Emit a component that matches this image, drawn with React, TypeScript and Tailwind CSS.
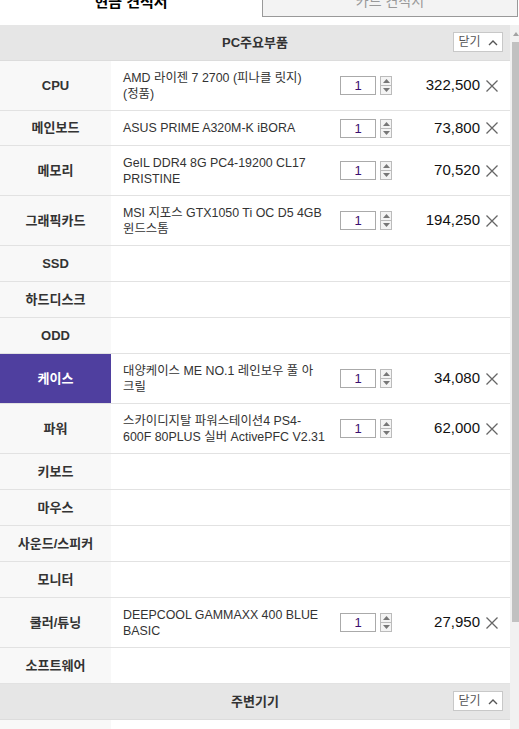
import React from 'react'

type Row = {
  label: string
  lines?: string[]
  price?: string
  h: string
  active?: boolean
}

const rows: Row[] = [
  { label: 'CPU', lines: ['AMD 라이젠 7 2700 (피나클 릿지)', '(정품)'], price: '322,500', h: 'h-[50px]' },
  { label: '메인보드', lines: ['ASUS PRIME A320M-K iBORA'], price: '73,800', h: 'h-[35px]' },
  { label: '메모리', lines: ['GeIL DDR4 8G PC4-19200 CL17', 'PRISTINE'], price: '70,520', h: 'h-[50px]' },
  { label: '그래픽카드', lines: ['MSI 지포스 GTX1050 Ti OC D5 4GB', '윈드스톰'], price: '194,250', h: 'h-[50px]' },
  { label: 'SSD', h: 'h-[36px]' },
  { label: '하드디스크', h: 'h-[36px]' },
  { label: 'ODD', h: 'h-[36px]' },
  { label: '케이스', lines: ['대양케이스 ME NO.1 레인보우 풀 아', '크릴'], price: '34,080', h: 'h-[50px]', active: true },
  { label: '파워', lines: ['스카이디지탈 파워스테이션4 PS4-', '600F 80PLUS 실버 ActivePFC V2.31'], price: '62,000', h: 'h-[50px]' },
  { label: '키보드', h: 'h-[36px]' },
  { label: '마우스', h: 'h-[36px]' },
  { label: '사운드/스피커', h: 'h-[36px]' },
  { label: '모니터', h: 'h-[36px]' },
  { label: '쿨러/튜닝', lines: ['DEEPCOOL GAMMAXX 400 BLUE', 'BASIC'], price: '27,950', h: 'h-[50px]' },
  { label: '소프트웨어', h: 'h-[36px]' },
]

const CloseButton = () => (
  <button className="absolute right-[7px] top-[7px] flex h-[20px] w-[50px] items-center justify-center gap-[7px] border border-[#c8c8c8] bg-white text-[12px] leading-none text-[#555]">
    <span>닫기</span>
    <svg width="10" height="7" viewBox="0 0 10 7">
      <path d="M1 6 L5 2 L9 6" fill="none" stroke="#555" strokeWidth="1.4" />
    </svg>
  </button>
)

const SectionHeader = ({ title }: { title: string }) => (
  <div className="relative flex h-[36px] items-center justify-center border-b border-[#dcdcdc] bg-[#e6e6e6]">
    <span className="text-[13px] font-bold text-[#333]">{title}</span>
    <CloseButton />
  </div>
)

const Stepper = () => (
  <div className="flex items-center gap-[4px]">
    <div className="flex h-[19px] w-[36px] items-center justify-center border border-[#aaa] bg-white text-[13px] leading-none text-[#3a1070]">
      1
    </div>
    <div className="flex h-[19px] w-[12px] flex-col border border-[#bbb] bg-[#f4f4f4]">
      <div className="flex flex-1 items-center justify-center border-b border-[#bbb]">
        <svg width="7" height="4" viewBox="0 0 7 4">
          <path d="M0 4 L3.5 0 L7 4 Z" fill="#777" />
        </svg>
      </div>
      <div className="flex flex-1 items-center justify-center">
        <svg width="7" height="4" viewBox="0 0 7 4">
          <path d="M0 0 L3.5 4 L7 0 Z" fill="#777" />
        </svg>
      </div>
    </div>
  </div>
)

const PartRow = ({ row }: { row: Row }) => (
  <div className={`flex border-b border-[#e2e2e2] ${row.h}`}>
    <div
      className={`flex w-[111px] shrink-0 items-center justify-center text-[13px] font-bold ${
        row.active ? 'bg-[#4f3f9f] text-white' : 'bg-[#f8f8f8] text-[#333]'
      }`}
    >
      {row.label}
    </div>
    {row.lines && (
      <div className="flex flex-1 items-center pl-[12px] pr-[12px]">
        <div className="w-[217px] text-[12.4px] leading-4 text-[#333]">
          {row.lines.map((l, i) => (
            <div key={i} className="whitespace-nowrap">
              {l}
            </div>
          ))}
        </div>
        <Stepper />
        <div className="flex-1 text-right text-[15px] text-[#111]">{row.price}</div>
        <svg className="ml-[6px]" width="12" height="12" viewBox="0 0 12 12">
          <path d="M0.5 0.5 L11.5 11.5 M11.5 0.5 L0.5 11.5" stroke="#666" strokeWidth="1.3" />
        </svg>
      </div>
    )}
  </div>
)

export default function App() {
  return (
    <div
      className="h-[729px] w-[519px] overflow-hidden bg-white"
      style={{ fontFamily: '"Liberation Sans", "Noto Sans CJK KR", sans-serif' }}
    >
      <div className="-mt-[13px] flex h-[30px]">
        <div className="flex w-[262px] items-center justify-center bg-white text-[15px] font-bold text-black">
          현금 견적서
        </div>
        <div className="mr-[1px] flex flex-1 items-center justify-center border-x border-b border-[#999] bg-[#f3f3f3] text-[14px] text-[#999]">
          카드 견적서
        </div>
      </div>
      <div className="mt-[8px] flex">
        <div className="flex-1">
          <SectionHeader title="PC주요부품" />
          {rows.map((r) => (
            <PartRow key={r.label} row={r} />
          ))}
          <SectionHeader title="주변기기" />
          <div className="flex h-[36px]">
            <div className="w-[111px] bg-[#f8f8f8]" />
          </div>
        </div>
        <div className="relative w-[9px] bg-[#f1f1f1]">
          <svg className="absolute left-[3px] top-[7px]" width="6" height="4" viewBox="0 0 6 4">
            <path d="M0 4 L3 0 L6 4 Z" fill="#a3a3a3" />
          </svg>
          <div className="absolute left-[2px] right-0 top-[17px] h-[580px] bg-[#c1c1c1]" />
        </div>
      </div>
    </div>
  )
}
